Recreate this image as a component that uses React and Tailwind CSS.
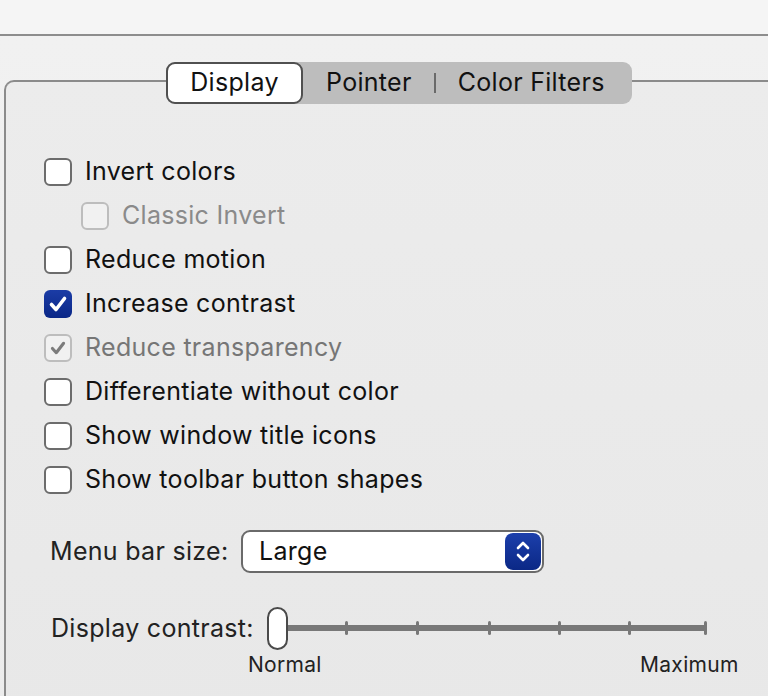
import React from "react";

const options = [
  { label: "Invert colors", checked: false },
  { label: "Classic Invert", checked: false, disabled: true, indent: true },
  { label: "Reduce motion", checked: false },
  { label: "Increase contrast", checked: true },
  { label: "Reduce transparency", checked: true, disabled: true },
  { label: "Differentiate without color", checked: false },
  { label: "Show window title icons", checked: false },
  { label: "Show toolbar button shapes", checked: false },
];

function CheckMark({ color }) {
  return (
    <svg viewBox="0 0 28 28" className="h-full w-full">
      <path d="M7.5 14.5 L12 19.5 L20.5 8.5" fill="none" stroke={color} strokeWidth="3.6" strokeLinecap="round" strokeLinejoin="round" />
    </svg>
  );
}

function Checkbox({ checked, disabled }) {
  if (checked && !disabled) {
    return (
      <span className="flex h-[28px] w-[28px] items-center justify-center rounded-[6px] bg-gradient-to-b from-[#1b3ca6] to-[#0a2787]">
        <CheckMark color="#ffffff" />
      </span>
    );
  }
  if (disabled) {
    return (
      <span className="flex h-[28px] w-[28px] items-center justify-center rounded-[6px] border-2 border-[#bdbdbd] bg-[#f1f1f1]">
        {checked ? <CheckMark color="#7c7c7c" /> : null}
      </span>
    );
  }
  return <span className="h-[28px] w-[28px] rounded-[6px] border-2 border-[#6c6c6c] bg-white" />;
}

function Segmented() {
  return (
    <div className="flex h-[42px] w-[466px] items-center rounded-[9px] bg-[#bdbdbd] text-[25px] tracking-[0.3px] text-[#111]">
      <div className="flex h-full w-[137px] items-center justify-center rounded-[9px] border-2 border-[#505050] bg-white">
        Display
      </div>
      <div className="flex flex-1 items-center pl-[23px]">
        <span>Pointer</span>
        <span className="ml-[22px] mr-[22px] h-[20px] w-[2px] bg-[#6a6a6a]" />
        <span>Color Filters</span>
      </div>
    </div>
  );
}

function Stepper() {
  return (
    <span className="flex h-[37px] w-[36px] items-center justify-center rounded-[8px] bg-gradient-to-b from-[#1c3fab] to-[#0b2886]">
      <svg viewBox="0 0 36 37" className="h-full w-full">
        <path d="M13 15 L18 10 L23 15" fill="none" stroke="#fff" strokeWidth="2.6" strokeLinecap="round" strokeLinejoin="round" />
        <path d="M13 22 L18 27 L23 22" fill="none" stroke="#fff" strokeWidth="2.6" strokeLinecap="round" strokeLinejoin="round" />
      </svg>
    </span>
  );
}

function ContrastSlider() {
  const ticks = [79, 150, 222, 292, 362, 438];
  return (
    <div className="relative h-[43px] w-[442px]">
      <div className="absolute left-[10px] right-[3px] top-[18px] h-[6px] bg-[#787878]" />
      {ticks.map((x) => (
        <div
          key={x}
          className="absolute top-[14px] h-[14px] w-[3px] rounded-full bg-[#787878]"
          style={{ left: x - 1.5 }}
        />
      ))}
      <div className="absolute left-0 top-0 h-[43px] w-[21px] rounded-full border-2 border-[#4a4a4a] bg-white" />
    </div>
  );
}

export default function App() {
  return (
    <div className="h-[696px] w-full overflow-hidden bg-[#f5f5f5] font-['Inter','Liberation_Sans',sans-serif]">
      <div className="h-[36px] border-b-2 border-[#8d8d8d]" />
      <div className="h-full bg-gradient-to-b from-[#f1f1f1] to-[#ececec] pl-[4px] pt-[44px]">
        <div className="relative h-full rounded-tl-[10px] border-l-2 border-t-2 border-[#8b8b8b] bg-gradient-to-b from-[#ececec] to-[#e8e8e8]">
          <div className="absolute left-[160px] top-[-20px]">
            <Segmented />
          </div>

          <div className="flex flex-col pl-[38px] pt-[68px]">
            {options.map((o) => (
              <div key={o.label} className={`flex h-[44px] items-center gap-[13px] ${o.indent ? "pl-[37px]" : ""}`}>
                <Checkbox checked={o.checked} disabled={o.disabled} />
                <span
                  className={`text-[25px] tracking-[0.3px] ${
                    o.indent ? "text-[#8a8a8a]" : o.disabled ? "text-[#767676]" : "text-[#111]"
                  }`}
                >
                  {o.label}
                </span>
              </div>
            ))}
          </div>

          <div className="mt-[28px] flex items-center pl-[44px]">
            <span className="w-[191px] text-[25px] tracking-[0.3px] text-[#222]">Menu bar size:</span>
            <div className="flex h-[43px] w-[303px] items-center justify-between rounded-[9px] border-2 border-[#6a6a6a] bg-white pl-[16px] pr-[1px]">
              <span className="text-[25px] tracking-[0.3px] text-[#111]">Large</span>
              <Stepper />
            </div>
          </div>

          <div className="mt-[34px] flex items-center pl-[45px]">
            <span className="w-[216px] text-[25px] tracking-[0.3px] text-[#222]">Display contrast:</span>
            <ContrastSlider />
          </div>
          <div className="-mt-[1px] flex pl-[242px] text-[21px] tracking-[0.3px] text-[#222]">
            <span className="w-[392px]">Normal</span>
            <span>Maximum</span>
          </div>
        </div>
      </div>
    </div>
  );
}
